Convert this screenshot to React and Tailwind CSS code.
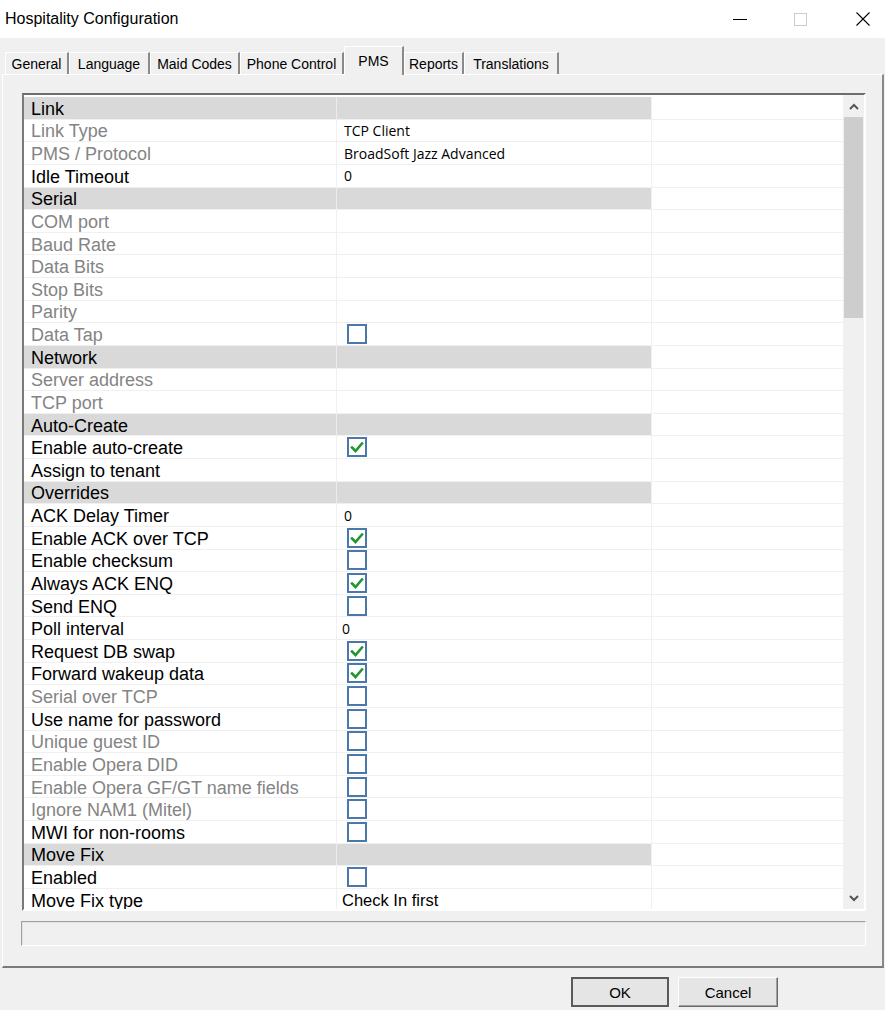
import React from "react";

const rows = [
  { cat: "Link" },
  { label: "Link Type", dis: true, text: "TCP Client" },
  { label: "PMS / Protocol", dis: true, text: "BroadSoft Jazz Advanced" },
  { label: "Idle Timeout", text: "0" },
  { cat: "Serial" },
  { label: "COM port", dis: true },
  { label: "Baud Rate", dis: true },
  { label: "Data Bits", dis: true },
  { label: "Stop Bits", dis: true },
  { label: "Parity", dis: true },
  { label: "Data Tap", dis: true, cb: false },
  { cat: "Network" },
  { label: "Server address", dis: true },
  { label: "TCP port", dis: true },
  { cat: "Auto-Create" },
  { label: "Enable auto-create", cb: true },
  { label: "Assign to tenant" },
  { cat: "Overrides" },
  { label: "ACK Delay Timer", text: "0" },
  { label: "Enable ACK over TCP", cb: true },
  { label: "Enable checksum", cb: false },
  { label: "Always ACK ENQ", cb: true },
  { label: "Send ENQ", cb: false },
  { label: "Poll interval", text: "0", shift: true },
  { label: "Request DB swap", cb: true },
  { label: "Forward wakeup data", cb: true },
  { label: "Serial over TCP", dis: true, cb: false },
  { label: "Use name for password", cb: false },
  { label: "Unique guest ID", dis: true, cb: false },
  { label: "Enable Opera DID", dis: true, cb: false },
  { label: "Enable Opera GF/GT name fields", dis: true, cb: false },
  { label: "Ignore NAM1 (Mitel)", dis: true, cb: false },
  { label: "MWI for non-rooms", cb: false },
  { cat: "Move Fix" },
  { label: "Enabled", cb: false },
  { label: "Move Fix type", big: "Check In first" },
];

const tabs = [
  { name: "General", w: "w-[64px]" },
  { name: "Language", w: "w-[81px]" },
  { name: "Maid Codes", w: "w-[90px]" },
  { name: "Phone Control", w: "w-[104px]" },
  { name: "PMS", w: "w-[60px]", sel: true },
  { name: "Reports", w: "w-[60px]" },
  { name: "Translations", w: "w-[95px]" },
];

function Checkbox({ checked }) {
  return (
    <div className="ml-[10px] w-[20px] h-[20px] border-2 border-[#4a78ab] bg-white flex items-center justify-center">
      {checked && (
        <svg width="14" height="12" viewBox="0 0 14 12">
          <path d="M2 6.5 L5.5 10 L12 2.5" fill="none" stroke="#23962f" strokeWidth="2.6" strokeLinecap="square" />
        </svg>
      )}
    </div>
  );
}

function Row({ r }) {
  if (r.cat) {
    return (
      <div className="flex h-[22.63px] border-b border-[#f0f0f0]">
        <div className="w-[313px] bg-[#d9d9d9] border-r border-[#ececec] pl-[7px] pt-[2px] flex items-center text-[18px] text-black leading-none">
          {r.cat}
        </div>
        <div className="w-[315px] bg-[#d9d9d9] border-r border-[#f0f0f0]" />
        <div className="flex-1 bg-white" />
      </div>
    );
  }
  return (
    <div className="flex h-[22.63px] border-b border-[#f0f0f0] bg-white">
      <div
        className={`w-[313px] border-r border-[#f0f0f0] pl-[7px] pt-[2px] flex items-center text-[18px] leading-none whitespace-nowrap ${
          r.dis ? "text-[#848484]" : "text-black"
        }`}
      >
        {r.label}
      </div>
      <div className="w-[315px] border-r border-[#f0f0f0] flex items-center">
        {r.text && (
          <span
            className={`${r.shift ? "pl-[5px]" : "pl-[7px]"} pt-[1px] text-[14px] leading-none text-black`}
            style={{ fontFamily: '"Open Sans", "Noto Sans", sans-serif' }}
          >
            {r.text}
          </span>
        )}
        {r.big && <span className="pl-[5px] pt-[2px] text-[16.5px] leading-none text-black">{r.big}</span>}
        {r.cb !== undefined && <Checkbox checked={r.cb} />}
      </div>
      <div className="flex-1" />
    </div>
  );
}

export default function App() {
  return (
    <div
      className="w-[885px] h-[1010px] bg-[#f0f0f0] overflow-hidden"
      style={{ fontFamily: '"Liberation Sans", Arial, sans-serif' }}
    >
      {/* Title bar */}
      <div className="h-[38px] bg-white flex items-center">
        <span className="pl-[5px] text-[16px] text-black leading-none">Hospitality Configuration</span>
        <div className="ml-auto flex items-center">
          <svg width="14" height="14" viewBox="0 0 14 14" className="mr-[47px]">
            <path d="M0 7.5 H14" stroke="#000" strokeWidth="1" />
          </svg>
          <svg width="13" height="13" viewBox="0 0 13 13" className="mr-[49px]">
            <rect x="0.5" y="0.5" width="12" height="12" fill="none" stroke="#cccccc" strokeWidth="1" />
          </svg>
          <svg width="14" height="14" viewBox="0 0 14 14" className="mr-[15px]">
            <path d="M0.5 0.5 L13.5 13.5 M13.5 0.5 L0.5 13.5" stroke="#000" strokeWidth="1.1" />
          </svg>
        </div>
      </div>

      {/* Tabs */}
      <div className="h-[36px] flex items-end pl-[5px] text-[14px] leading-none">
        {tabs.map((t) =>
          t.sel ? (
            <div
              key={t.name}
              className={`${t.w} h-[29px] mb-[-1px] relative z-10 bg-[#f0f0f0] border-t border-l border-white border-r-2 border-r-[#8a8a8a] flex items-start justify-center pt-[7px] text-black`}
            >
              {t.name}
            </div>
          ) : (
            <div
              key={t.name}
              className={`${t.w} h-[22px] bg-[#f0f0f0] border-t border-l border-white border-r-2 border-r-[#8a8a8a] flex items-center justify-center pt-[1px] text-black`}
            >
              {t.name}
            </div>
          )
        )}
      </div>

      {/* Tab panel */}
      <div className="ml-[2px] w-[882px] h-[894px] border-t border-l border-white border-r-2 border-b-2 border-r-[#8a8a8a] border-b-[#7a7a7a] pt-[18px] pl-[19px]">
        {/* Grid */}
        <div className="w-[844px] h-[818px] border-t-2 border-l-2 border-t-[#6e6e6e] border-l-[#7a7a7a] border-r-2 border-b-2 border-r-white border-b-white flex overflow-hidden">
          <div className="w-[819px] bg-white pt-[2px] overflow-hidden">
            {rows.map((r, i) => (
              <Row key={i} r={r} />
            ))}
          </div>
          <div className="w-[21px] bg-[#f0f0f0] flex flex-col">
            <div className="h-[22px] flex items-center justify-center">
              <svg width="10" height="7" viewBox="0 0 10 7">
                <path d="M1 6 L5 2 L9 6" fill="none" stroke="#555" strokeWidth="2" />
              </svg>
            </div>
            <div className="ml-[1px] w-[19px] h-[201px] bg-[#cdcdcd]" />
            <div className="flex-1" />
            <div className="h-[22px] flex items-center justify-center">
              <svg width="10" height="7" viewBox="0 0 10 7">
                <path d="M1 1 L5 5 L9 1" fill="none" stroke="#555" strokeWidth="2" />
              </svg>
            </div>
          </div>
        </div>
        {/* Status box */}
        <div className="mt-[10px] ml-[-1px] w-[845px] h-[25px] border border-[#a0a0a0] border-r-white border-b-white bg-[#f0f0f0] shadow-[inset_1px_1px_0_#e3e3e3]" />
      </div>

      {/* Buttons */}
      <div className="flex justify-end pr-[107px] pt-[9px] gap-[9px] text-[15px] leading-none">
        <button className="w-[98px] h-[30px] bg-[#e5e5e5] border-2 border-[#5a5a5a] text-black flex items-center justify-center">
          OK
        </button>
        <button className="w-[100px] h-[30px] bg-[#e5e5e5] border border-t-white border-l-white border-r-[#6a6a6a] border-b-[#6a6a6a] shadow-[inset_-1px_-1px_0_#a0a0a0] text-black flex items-center justify-center">
          Cancel
        </button>
      </div>
    </div>
  );
}
